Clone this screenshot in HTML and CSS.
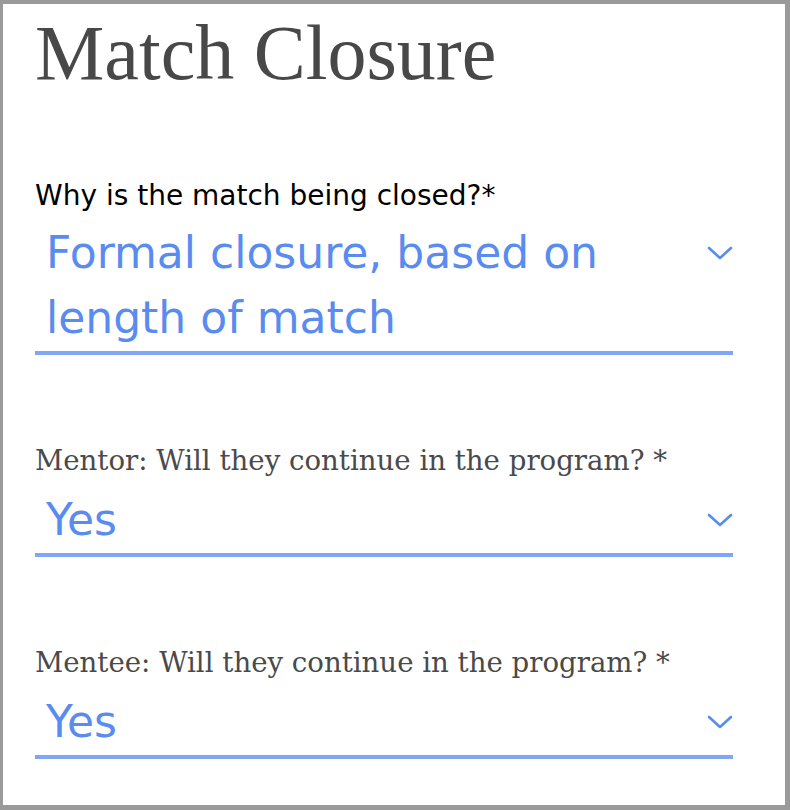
FILE: index.html
```html
<!DOCTYPE html>
<html lang="en">

<head>
    <meta charset="UTF-8">
    <meta name="viewport" content="width=device-width, initial-scale=1.0">
    <title>Match Closure</title>
    <link rel="stylesheet" href="styles.css">
</head>

<body>
    <div class="page">
        <h1 class="title">Match Closure</h1>

        <div class="field">
            <label class="label sans">Why is the match being closed?*</label>
            <div class="picker">
                <span class="picker-value">Formal closure, based on length of match</span>
                <span class="picker-arrow">
                    <svg width="26" height="16" viewBox="0 0 26 16">
                        <polyline points="2,3 13,13 24,3" fill="none" stroke="#5a8cf0" stroke-width="2.6" stroke-linecap="round" stroke-linejoin="round" />
                    </svg>
                </span>
            </div>
        </div>

        <div class="field">
            <label class="label serif">Mentor: Will they continue in the program? *</label>
            <div class="picker">
                <span class="picker-value">Yes</span>
                <span class="picker-arrow">
                    <svg width="26" height="16" viewBox="0 0 26 16">
                        <polyline points="2,3 13,13 24,3" fill="none" stroke="#5a8cf0" stroke-width="2.6" stroke-linecap="round" stroke-linejoin="round" />
                    </svg>
                </span>
            </div>
        </div>

        <div class="field">
            <label class="label serif">Mentee: Will they continue in the program? *</label>
            <div class="picker">
                <span class="picker-value">Yes</span>
                <span class="picker-arrow">
                    <svg width="26" height="16" viewBox="0 0 26 16">
                        <polyline points="2,3 13,13 24,3" fill="none" stroke="#5a8cf0" stroke-width="2.6" stroke-linecap="round" stroke-linejoin="round" />
                    </svg>
                </span>
            </div>
        </div>
    </div>
</body>

</html>
```

FILE: styles.css
```css
* {
    box-sizing: border-box;
    margin: 0;
}

body {
    background-color: #9a9a9a;
    padding: 4px 5px 5px 3px;
}

.page {
    background-color: #fff;
    min-height: calc(100vh - 9px);
    padding: 10px 52px 0 32px;
}

.title {
    font-family: 'Liberation Serif', serif;
    font-weight: normal;
    font-size: 78px;
    line-height: 78px;
    color: #484848;
    margin-bottom: 88px;
}

.field {
    display: flex;
    flex-direction: column;
    margin-bottom: 90px;
}

.label {
    display: block;
    line-height: 32px;
    margin-bottom: 10px;
}

.label.sans {
    font-family: 'DejaVu Sans', sans-serif;
    font-size: 28px;
    color: #000;
    margin-bottom: 8px;
}

.label.serif {
    font-family: 'DejaVu Serif', serif;
    font-size: 27.6px;
    color: #4a4a4a;
}

.picker {
    display: flex;
    align-items: flex-start;
    padding: 0 0 1px 11px;
    border-bottom: 4px solid #80a7f5;
}

.picker-value {
    flex: 1;
    font-family: 'DejaVu Sans', sans-serif;
    font-size: 44px;
    line-height: 65px;
    color: #5a8cf0;
    padding-right: 40px;
}

.picker-arrow {
    display: flex;
    align-items: center;
    height: 65px;
}
```
